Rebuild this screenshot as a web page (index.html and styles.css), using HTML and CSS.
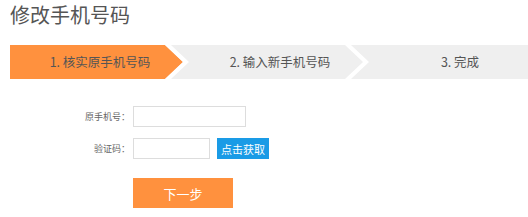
FILE: index.html
```html
<!DOCTYPE html>
<html lang="zh-CN">
  <head>
    <meta charset="UTF-8" />
    <meta name="viewport" content="width=device-width, initial-scale=1.0" />
    <title>修改手机号码</title>
    <link rel="stylesheet" href="styles.css">
  </head>
  <body>
    <div id="container">
      <h1>修改手机号码</h1>
      <ul class="steps">
        <li class="step active"><span>1. 核实原手机号码</span></li>
        <li class="step"><span>2. 输入新手机号码</span></li>
        <li class="step last"><span>3. 完成</span></li>
      </ul>
      <form class="form">
        <div class="row">
          <label>原手机号：</label>
          <input type="text" class="phone" />
        </div>
        <div class="row">
          <label>验证码：</label>
          <input type="text" class="code" />
          <button type="button" class="btn-code">点击获取</button>
        </div>
        <button type="button" class="btn-next">下一步</button>
      </form>
    </div>
  </body>
</html>
```

FILE: styles.css
```css
body {
  margin: 0;
  background-color: #fff;
  font-family: "Noto Sans CJK SC", "Noto Sans", sans-serif;
  color: #555;
}

h1 {
  margin: 0 0 0 10px;
  font-size: 20px;
  font-weight: normal;
  line-height: 29px;
  color: #555;
}

.steps {
  display: flex;
  list-style: none;
  margin: 16px 0 0 10px;
  padding: 0;
  height: 34px;
  background-color: #efefef;
  overflow: hidden;
}

.step {
  position: relative;
  flex: none;
  width: 180px;
  height: 34px;
  line-height: 34px;
  text-align: center;
  font-size: 12.5px;
  color: #555;
}

.step span {
  position: relative;
  z-index: 2;
}

.step.active::before {
  content: "";
  position: absolute;
  left: 0;
  top: 0;
  width: 173px;
  height: 34px;
  background-color: #ff913e;
  clip-path: polygon(0 0, 155px 0, 173px 17px, 155px 34px, 0 34px);
  z-index: 1;
}

.step::after {
  content: "";
  position: absolute;
  left: 155px;
  top: 0;
  width: 25px;
  height: 34px;
  background-color: #fff;
  clip-path: polygon(0 0, 6px 0, 24px 17px, 6px 34px, 0 34px, 18px 17px);
  z-index: 1;
}

.step.last::after {
  display: none;
}

.form {
  padding-top: 27px;
}

.row {
  display: flex;
  align-items: center;
  margin-bottom: 11px;
}

.row label {
  width: 130px;
  margin-right: 3px;
  text-align: right;
  font-size: 9px;
  color: #666;
}

.row input {
  box-sizing: border-box;
  border: 1px solid #ddd;
  padding: 0 4px;
  margin: 0;
  outline: none;
}

.phone {
  width: 113px;
  height: 21px;
}

.code {
  width: 77px;
  height: 21px;
}

.btn-code {
  margin-left: 7px;
  width: 52px;
  height: 21px;
  padding: 0;
  border: none;
  background-color: #1a9be6;
  color: #fff;
  font-family: inherit;
  font-size: 11px;
}

.btn-next {
  display: block;
  margin: 19px 0 0 133px;
  width: 100px;
  height: 30px;
  padding: 0;
  border: none;
  background-color: #ff913e;
  color: #fff;
  font-family: inherit;
  font-size: 13px;
}
```
